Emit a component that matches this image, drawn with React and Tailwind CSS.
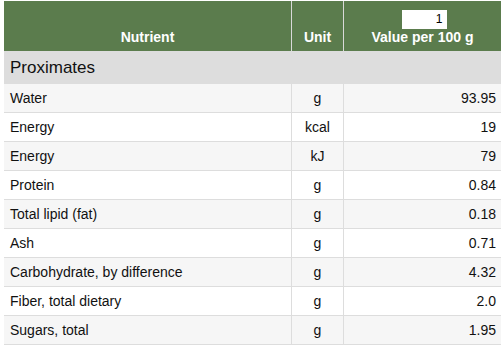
import React from "react";

const rows = [
  ["Water", "g", "93.95"],
  ["Energy", "kcal", "19"],
  ["Energy", "kJ", "79"],
  ["Protein", "g", "0.84"],
  ["Total lipid (fat)", "g", "0.18"],
  ["Ash", "g", "0.71"],
  ["Carbohydrate, by difference", "g", "4.32"],
  ["Fiber, total dietary", "g", "2.0"],
  ["Sugars, total", "g", "1.95"],
];

export default function App() {
  return (
    <div
      className="w-[501px] h-[345px] overflow-hidden bg-white pt-px pl-1 text-[#111]"
      style={{ fontFamily: '"Liberation Sans", Arial, sans-serif' }}
    >
      <div className="w-[497px]">
        <div className="flex h-[50px] bg-[#5b7c4d] text-white font-bold text-[14px] leading-4">
          <div className="w-[288px] border-r border-[#d9d9d9] flex items-end justify-center pb-[6px]">
            Nutrient
          </div>
          <div className="w-[52px] border-r border-[#d9d9d9] flex items-end justify-center pb-[6px]">
            Unit
          </div>
          <div className="flex-1 flex flex-col items-center justify-end pb-[6px]">
            <div className="w-[45px] h-[19px] bg-white text-black font-normal text-[12px] leading-[19px] text-right pr-1 ml-[3px]">
              1
            </div>
            <div>Value per 100 g</div>
          </div>
        </div>
        <div className="h-[33px] bg-[#dddddd] flex items-center pl-[6px] text-[17px]">
          Proximates
        </div>
        {rows.map((r, i) => (
          <div
            key={i}
            className={`flex h-[29px] border-b border-[#dddddd] text-[14px] ${
              i % 2 === 0 ? "bg-[#f6f6f6]" : "bg-white"
            }`}
          >
            <div className="w-[288px] border-r border-[#dddddd] flex items-center pl-[6px]">
              {r[0]}
            </div>
            <div className="w-[52px] border-r border-[#dddddd] flex items-center justify-center">
              {r[1]}
            </div>
            <div className="flex-1 flex items-center justify-end pr-[5px]">
              {r[2]}
            </div>
          </div>
        ))}
      </div>
    </div>
  );
}
